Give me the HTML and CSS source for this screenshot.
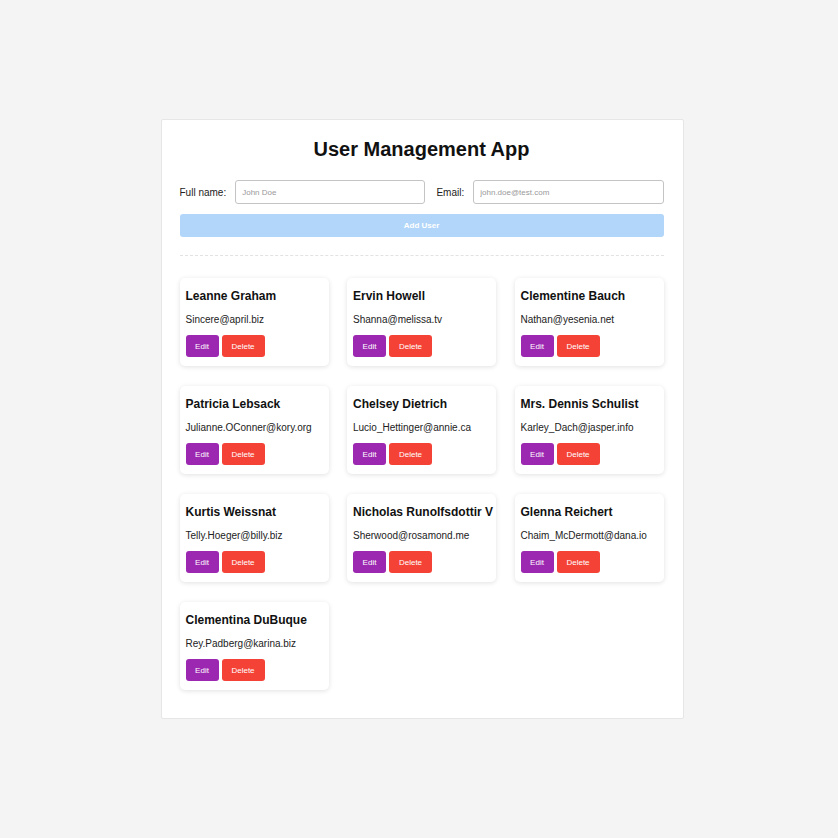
FILE: index.html
```html
<!DOCTYPE html>
<html>
<head>
<meta charset="utf-8">
<link rel="stylesheet" href="styles.css">
</head>
<body>
<div class="app">
  <h1 class="title">User Management App</h1>
  <form class="form">
    <div class="row">
      <label class="label">Full name:</label>
      <input class="input" placeholder="John Doe">
      <label class="label label-email">Email:</label>
      <input class="input" placeholder="john.doe@test.com">
    </div>
    <button type="button" class="add" disabled>Add User</button>
  </form>
  <hr class="divider">
  <div class="grid">
    <div class="card"><div class="name">Leanne Graham</div><div class="email">Sincere@april.biz</div><div class="actions"><button class="btn edit">Edit</button><button class="btn del">Delete</button></div></div>
    <div class="card"><div class="name">Ervin Howell</div><div class="email">Shanna@melissa.tv</div><div class="actions"><button class="btn edit">Edit</button><button class="btn del">Delete</button></div></div>
    <div class="card"><div class="name">Clementine Bauch</div><div class="email">Nathan@yesenia.net</div><div class="actions"><button class="btn edit">Edit</button><button class="btn del">Delete</button></div></div>
    <div class="card"><div class="name">Patricia Lebsack</div><div class="email">Julianne.OConner@kory.org</div><div class="actions"><button class="btn edit">Edit</button><button class="btn del">Delete</button></div></div>
    <div class="card"><div class="name">Chelsey Dietrich</div><div class="email">Lucio_Hettinger@annie.ca</div><div class="actions"><button class="btn edit">Edit</button><button class="btn del">Delete</button></div></div>
    <div class="card"><div class="name">Mrs. Dennis Schulist</div><div class="email">Karley_Dach@jasper.info</div><div class="actions"><button class="btn edit">Edit</button><button class="btn del">Delete</button></div></div>
    <div class="card"><div class="name">Kurtis Weissnat</div><div class="email">Telly.Hoeger@billy.biz</div><div class="actions"><button class="btn edit">Edit</button><button class="btn del">Delete</button></div></div>
    <div class="card"><div class="name">Nicholas Runolfsdottir V</div><div class="email">Sherwood@rosamond.me</div><div class="actions"><button class="btn edit">Edit</button><button class="btn del">Delete</button></div></div>
    <div class="card"><div class="name">Glenna Reichert</div><div class="email">Chaim_McDermott@dana.io</div><div class="actions"><button class="btn edit">Edit</button><button class="btn del">Delete</button></div></div>
    <div class="card"><div class="name">Clementina DuBuque</div><div class="email">Rey.Padberg@karina.biz</div><div class="actions"><button class="btn edit">Edit</button><button class="btn del">Delete</button></div></div>
  </div>
</div>
</body>
</html>
```

FILE: styles.css
```css
html, body {
  margin: 0;
  padding: 0;
  background: #f4f4f4;
  font-family: "Liberation Sans", Arial, sans-serif;
  color: #111;
}
body {
  padding-top: 119px;
  padding-bottom: 40px;
  padding-left: 6px;
}
.app {
  width: 484px;
  margin: 0 auto;
  padding: 16px 19px 28px 18px;
  background: #fff;
  border: 1px solid #e6e6e6;
  border-radius: 2px;
  box-sizing: content-box;
}
.title {
  margin: 0;
  text-align: center;
  font-size: 20px;
  font-weight: bold;
  line-height: 26px;
  color: #111;
}
.form {
  margin-top: 18px;
}
.row {
  display: flex;
  align-items: center;
  height: 24px;
}
.label {
  font-size: 10px;
  color: #222;
  margin-right: 9px;
}
.label-email {
  margin-left: 11px;
}
.input {
  flex: 1;
  height: 24px;
  box-sizing: border-box;
  border: 1px solid #c4c4c4;
  border-radius: 3px;
  padding: 0 6px;
  font-size: 8px;
  font-family: "Liberation Sans", Arial, sans-serif;
  outline: none;
}
.input::placeholder {
  color: #999;
}
.add {
  display: block;
  width: 100%;
  height: 23px;
  margin-top: 10px;
  border: none;
  border-radius: 3px;
  background: #b1d6f9;
  color: #fff;
  font-weight: bold;
  font-size: 8px;
  font-family: "Liberation Sans", Arial, sans-serif;
}
.divider {
  margin: 18px 0 22px 0;
  border: none;
  border-top: 1px dashed #e2e2e2;
  height: 0;
}
.grid {
  display: grid;
  grid-template-columns: repeat(3, 149px);
  column-gap: 18.5px;
  row-gap: 20px;
}
.card {
  height: 88px;
  box-sizing: border-box;
  padding: 11px 6px 0 6px;
  background: #fff;
  border-radius: 5px;
  box-shadow: 0 1px 5px rgba(0, 0, 0, 0.12);
}
.name {
  font-size: 12px;
  font-weight: bold;
  line-height: 14px;
  color: #111;
  white-space: nowrap;
}
.email {
  margin-top: 11px;
  font-size: 10px;
  line-height: 12px;
  color: #222;
  white-space: nowrap;
}
.actions {
  display: flex;
  gap: 3px;
  margin-top: 9px;
}
.btn {
  height: 22px;
  border: none;
  border-radius: 3px;
  color: #fff;
  font-size: 8px;
  font-family: "Liberation Sans", Arial, sans-serif;
  padding: 0;
}
.edit {
  width: 33px;
  background: #9c27b0;
}
.del {
  width: 43px;
  background: #f44336;
}
```
